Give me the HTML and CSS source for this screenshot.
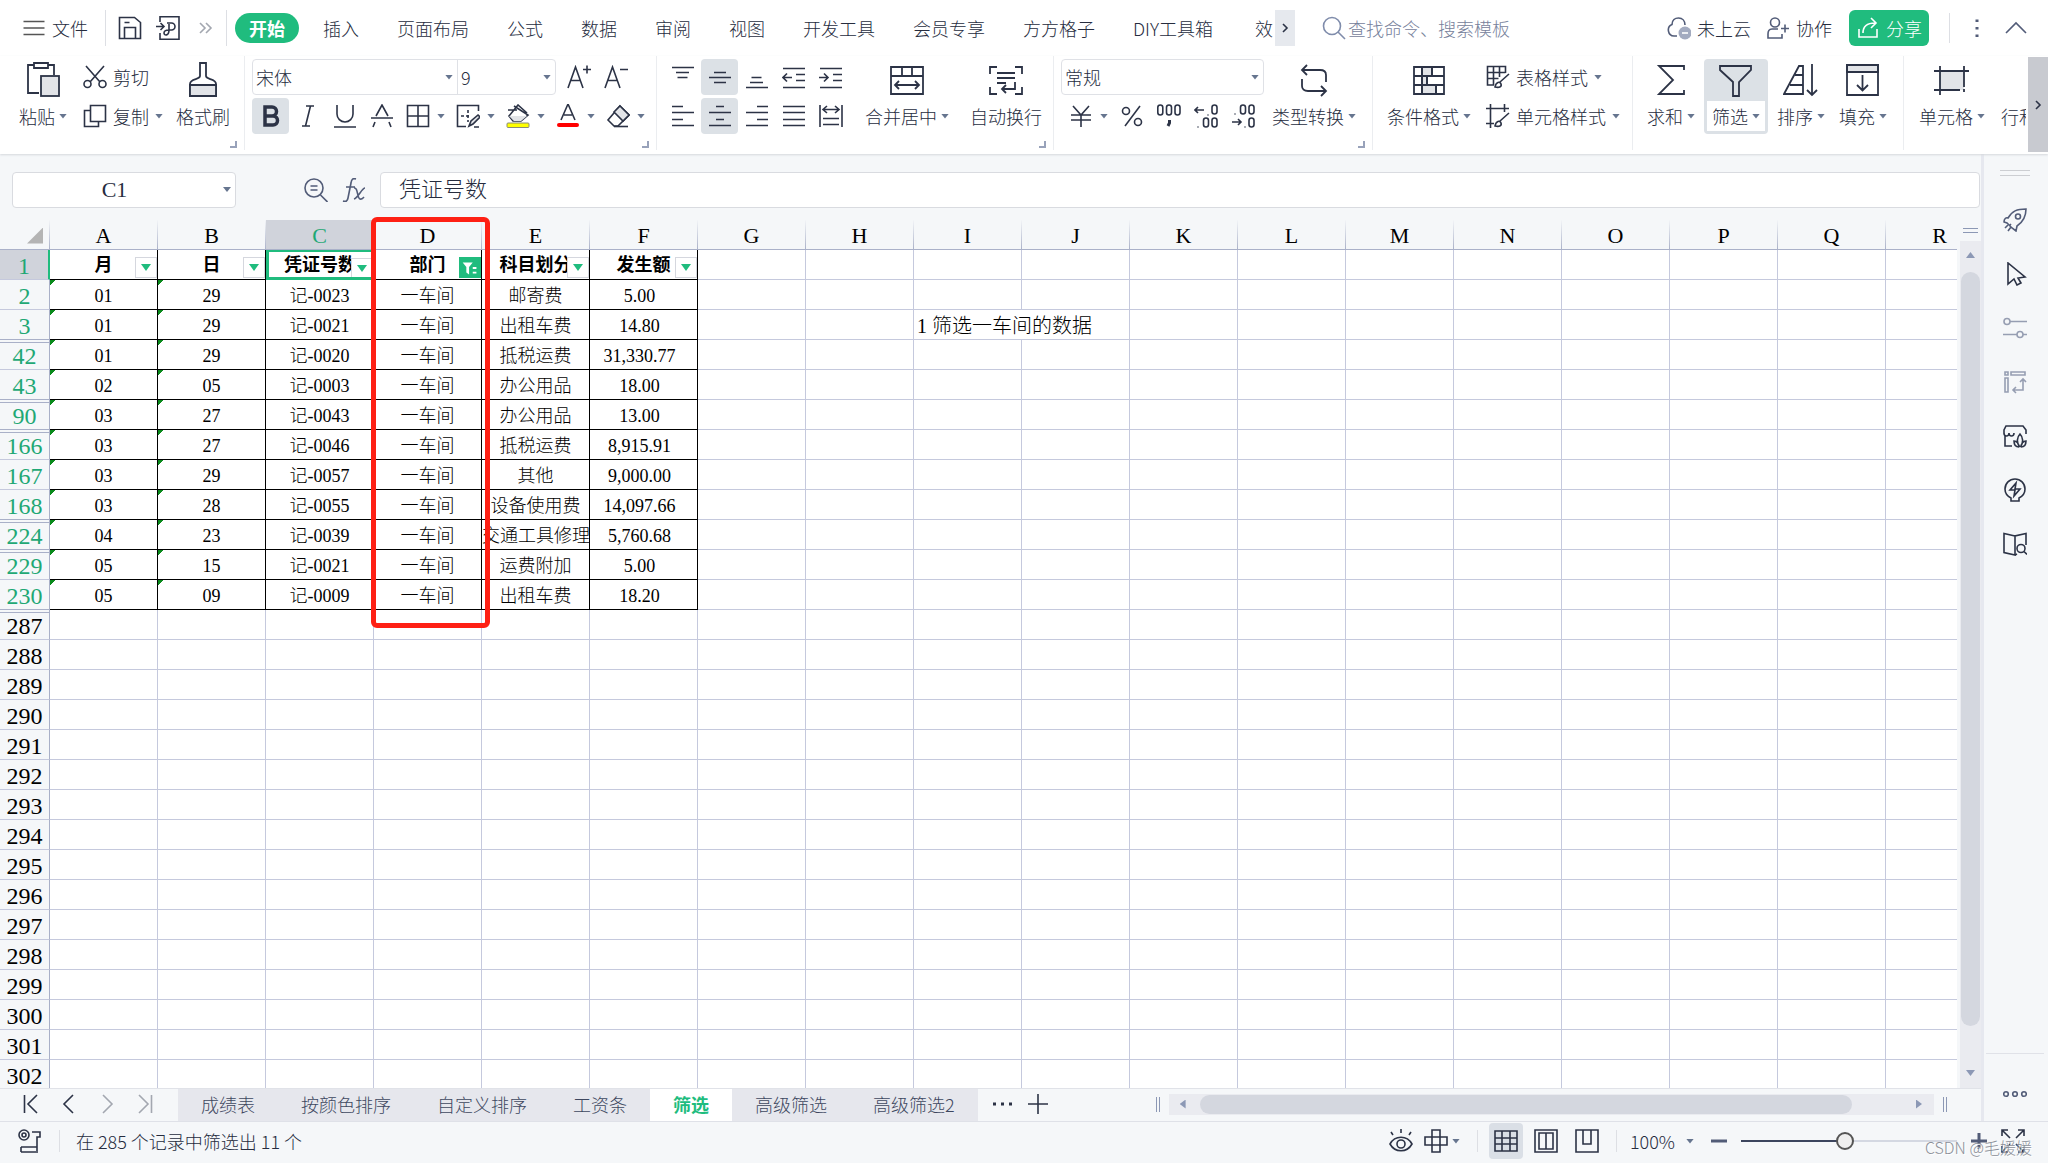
FILE: index.html
```html
<!DOCTYPE html>
<html lang="zh-CN">
<head>
<meta charset="utf-8">
<title>筛选 - 表格</title>
<link rel="stylesheet" href="styles.css">
</head>
<body>
<svg class="defs" aria-hidden="true">
  <symbol id="filter-on" viewBox="0 0 24 20"><path d="M4 4h11l-4 5v8l-3-2V9z" fill="#fff"/><path d="M15 10h4M15 15h4" stroke="#fff" stroke-width="2" fill="none"/></symbol>
</svg>

<header class="menubar">
  <button class="file"><svg class="ic" viewBox="0 0 24 24"><path d="M1.500 5.500h21M1.500 12h21M1.500 18.500h21"/></svg>文件</button>
  <div class="quick">
    <button aria-label="保存"><svg class="ic" viewBox="0 0 24 24"><path d="M1.500 1.500h15l6 5v16h-21zM6.500 22V11.500h11V22M6.500 6.500h5"/></svg></button>
    <button aria-label="输出为PDF"><svg class="ic" viewBox="0 0 24 24"><path d="M4 6V.8h19v22.400H4V17M0 10.500h7M4.500 7l3.500 3.500L4.500 14M11 7h4.500a3.500 3.500 0 0 1 0 7H13V8M13 14c0 6-5 6-5 3s3-3 5-3"/></svg></button>
    <button aria-label="更多"><svg class="ic pale" viewBox="0 0 24 24"><path d="M6 7l5 5-5 5M12 7l5 5-5 5"/></svg></button>
  </div>
  <nav class="tabs">
    <button class="tab current">开始</button><button class="tab">插入</button><button class="tab">页面布局</button><button class="tab">公式</button><button class="tab">数据</button><button class="tab">审阅</button><button class="tab">视图</button><button class="tab">开发工具</button><button class="tab">会员专享</button><button class="tab">方方格子</button><button class="tab">DIY工具箱</button><button class="tab cut">效率</button>
    <button class="more" aria-label="更多选项卡"><svg class="ic" viewBox="0 0 24 24"><path d="M10 8l4 4-4 4"/></svg></button>
  </nav>
  <label class="search"><svg class="ic" viewBox="0 0 24 24"><circle cx="10" cy="10" r="8.500"/><path d="M16 16l7 7"/></svg><input type="text" placeholder="查找命令、搜索模板"></label>
  <div class="account">
    <button><svg class="ic slate" viewBox="0 0 24 24"><path d="M10 20H7a6 6 0 0 1-2-11.500C5 4 8 2 11.500 2c4 0 6.500 3 6.500 7"/><circle cx="18" cy="17" r="6.500" fill="#a3abc0" stroke="none"/><path d="M15 17h6" stroke="#fff"/></svg>未上云</button>
    <button><svg class="ic slate" viewBox="0 0 24 24"><circle cx="9" cy="6.500" r="4.500"/><path d="M12 13H6c-3 0-4 2-4 5v4h14v-4M15 12.500h8M19 8.500v8"/></svg>协作</button>
    <button class="share"><svg class="ic" viewBox="0 0 24 24"><path d="M3 13v8h18v-8M7 17C7 10 11 7 19 7M15 2l5 5-5 5"/></svg>分享</button>
    <i class="rule"></i>
    <button aria-label="菜单"><svg class="ic slate" viewBox="0 0 24 24"><path d="M12 3.500v2.600M12 11v2.600M12 18.500v2.600" stroke-width="3"/></svg></button>
    <button aria-label="折叠功能区"><svg class="ic slate" viewBox="0 0 24 24"><path d="M2 17L12 7l10 10"/></svg></button>
  </div>
</header>

<section class="ribbon">
  <div class="group clip">
    <button class="big"><svg class="ic l" viewBox="0 0 36 36"><path d="M14 31H3V3h6M23 3h6v10M9 1h14v5H9z"/><rect x="16" y="14" width="18" height="20" fill="#e2e4e8"/></svg><span>粘贴<i class="caret"></i></span></button>
    <div class="stack">
      <button class="wide"><svg class="ic" viewBox="0 0 24 24"><circle cx="4.500" cy="19" r="3.500"/><circle cx="19.500" cy="19" r="3.500"/><path d="M3 1l14 16M21 1L7 17"/></svg>剪切</button>
      <button class="wide"><svg class="ic" viewBox="0 0 24 24"><path d="M7.500 1.500h15v16h-15zM7 6.500H1.500v16h14V18"/></svg>复制<i class="caret"></i></button>
    </div>
    <button class="big"><svg class="ic l" viewBox="0 0 36 36"><path d="M15 1h6v13c0 4 10 2 10 8v12H5V22c0-6 10-4 10-8z"/><path d="M5 23h26v11H5z" fill="#e2e4e8"/></svg><span>格式刷</span></button>
    <i class="corner"></i>
  </div>

  <div class="group font">
    <div class="stack">
      <div class="line">
        <div class="combo"><div class="pick family"><select aria-label="字体"><option>宋体</option></select><i class="caret"></i></div><div class="pick size"><select aria-label="字号"><option>9</option></select><i class="caret"></i></div></div>
        <button class="sq" aria-label="增大字号"><svg class="ic" viewBox="0 0 24 24"><path d="M1 23L8.500 2 16 23M4 15.500h9M16 4.500h8M20 .5v8"/></svg></button>
        <button class="sq" aria-label="减小字号"><svg class="ic" viewBox="0 0 24 24"><path d="M1 23L8.500 2 16 23M4 15.500h9M16 4.500h8"/></svg></button>
      </div>
      <div class="line">
        <button class="sq on" aria-label="加粗"><svg class="ic" viewBox="0 0 24 24"><path d="M6 3h7a4.500 4.500 0 0 1 0 9H6zM6 12h8a4.500 4.500 0 0 1 0 9H6z" stroke-width="3.500"/></svg></button>
        <button class="sq" aria-label="倾斜"><svg class="ic" viewBox="0 0 24 24"><path d="M10 2h8M6 22h8M14.500 2l-5 20"/></svg></button>
        <button class="sq" aria-label="下划线"><svg class="ic" viewBox="0 0 24 24"><path d="M4 1v9a8 8 0 0 0 16 0V1M1 23h22"/></svg></button>
        <button class="sq" aria-label="删除线"><svg class="ic" viewBox="0 0 24 24"><path d="M6 12l6-11 6 11M1 14h22M5 18l-2 5M19 18l2 5"/></svg></button>
        <button class="sq drop" aria-label="边框"><svg class="ic" viewBox="0 0 24 24"><path d="M1.500 1.500h21v21h-21zM12 1.500v21M1.500 12h21"/></svg><i class="caret"></i></button>
        <button class="sq drop" aria-label="绘图边框"><svg class="ic" viewBox="0 0 24 24"><path d="M10 22.500H1.500v-21h21V7"/><path d="M12 6v12M5 12h10" stroke-dasharray="3 2"/><path d="M13 22l2-5 7-6 2 2-7 7zM18 23h5" fill="#e2e4e8"/></svg><i class="caret"></i></button>
        <button class="sq drop" aria-label="填充颜色"><svg class="ic" viewBox="0 0 24 24"><path d="M2 6h9M8 2l14 9-7 6H7l-4-5L12 1l9 8"/><path d="M3 12h18l-6 5H8z" fill="#e2e4e8" stroke="none"/><rect x="1" y="19" width="22" height="4.500" rx="1" fill="#ff0" stroke="#8a8c75" stroke-width="1"/></svg><i class="caret"></i></button>
        <button class="sq drop" aria-label="字体颜色"><svg class="ic" viewBox="0 0 24 24"><path d="M5 16l7-16 7 16M8 11h8"/><rect x="1" y="19" width="22" height="4" rx="2" fill="red" stroke="none"/></svg><i class="caret"></i></button>
        <button class="sq drop" aria-label="清除"><svg class="ic" viewBox="0 0 24 24"><path d="M14 2l9 9-11 11H8l-6-6z"/><path d="M14 2l9 9-6 6-9-9z" fill="#e2e4e8"/><path d="M8 22.500h14"/></svg><i class="caret"></i></button>
      </div>
    </div>
    <i class="corner"></i>
  </div>

  <div class="group align">
    <div class="stack">
      <div class="line">
        <button class="sq" aria-label="顶端对齐"><svg class="ic" viewBox="0 0 24 24"><path d="M1 2.500h22M5 7.500h13M6.500 12.500h10"/></svg></button>
        <button class="sq on" aria-label="垂直居中"><svg class="ic" viewBox="0 0 24 24"><path d="M6 7.500h12M1 12.500h22M6 17.500h12"/></svg></button>
        <button class="sq" aria-label="底端对齐"><svg class="ic" viewBox="0 0 24 24"><path d="M6.500 12.500h10M5 17.500h13M1 22.500h22"/></svg></button>
        <button class="sq" aria-label="减少缩进"><svg class="ic" viewBox="0 0 24 24"><path d="M1 3.500h22M14 9.500h9M14 15.500h9M1 22.500h22M10 12.500H1M5 8.500l-4 4 4 4"/></svg></button>
        <button class="sq" aria-label="增加缩进"><svg class="ic" viewBox="0 0 24 24"><path d="M1 3.500h22M14 9.500h9M14 15.500h9M1 22.500h22M0 12.500h9M5 8.500l4 4-4 4"/></svg></button>
      </div>
      <div class="line">
        <button class="sq" aria-label="左对齐"><svg class="ic" viewBox="0 0 24 24"><path d="M1 2.500h11M1 8.500h22M1 15.500h11M1 21.500h22"/></svg></button>
        <button class="sq on" aria-label="水平居中"><svg class="ic" viewBox="0 0 24 24"><path d="M8 2.500h8M1 8.500h22M8 15.500h8M1 21.500h22"/></svg></button>
        <button class="sq" aria-label="右对齐"><svg class="ic" viewBox="0 0 24 24"><path d="M12 2.500h11M1 8.500h22M12 15.500h11M1 21.500h22"/></svg></button>
        <button class="sq" aria-label="两端对齐"><svg class="ic" viewBox="0 0 24 24"><path d="M1 2.500h22M1 8.500h22M1 15.500h22M1 21.500h22"/></svg></button>
        <button class="sq" aria-label="分散对齐"><svg class="ic" viewBox="0 0 24 24"><path d="M1 1v22M23 1v22M4 5.500h16M8 2L4 5.500 8 9M16 2l4 3.500L16 9M4 14.500h16M4 20.500h16"/></svg></button>
      </div>
    </div>
    <button class="big"><svg class="ic l" viewBox="0 0 36 36"><path d="M2 5h32v27H2zM2 14h32M13 5v9M23 5v9M6 23h24M10 19l-4 4 4 4M26 19l4 4-4 4"/></svg><span>合并居中<i class="caret"></i></span></button>
    <button class="big"><svg class="ic l" viewBox="0 0 36 36"><path d="M9 5H2v7M27 5h7v7M9 32H2v-7M27 32h7v-7M9 11h18M9 16h18M9 21h9M27 20v7H14M18 23l-4 4 4 4"/></svg><span>自动换行</span></button>
    <i class="corner"></i>
  </div>

  <div class="group number">
    <div class="stack">
      <div class="line"><div class="combo"><div class="pick format"><select aria-label="数字格式"><option>常规</option></select><i class="caret"></i></div></div></div>
      <div class="line inset">
        <button class="sq drop" aria-label="货币"><svg class="ic" viewBox="0 0 24 24"><path d="M4 2l8 9 8-9M2 11h20M2 16h20M12 11v12"/></svg><i class="caret"></i></button>
        <button class="sq" aria-label="百分比"><svg class="ic" viewBox="0 0 24 24"><circle cx="6" cy="7" r="3.500"/><circle cx="18" cy="18" r="3.500"/><path d="M20 2L5 22"/></svg></button>
        <button class="sq" aria-label="千位分隔"><svg class="ic" viewBox="0 0 24 24"><rect x="0.800" y="1" width="5" height="10" rx="2.500"/><rect x="9.500" y="1" width="5" height="10" rx="2.500"/><rect x="18" y="1" width="5" height="10" rx="2.500"/><path d="M12.500 16v3l-1.500 3" stroke-width="3"/></svg></button>
        <button class="sq" aria-label="增加小数"><svg class="ic" viewBox="0 0 24 24"><path d="M10 6H1M4 3L1 6l3 3M14 10.500v1M4 22.500v1" /><rect x="18" y="1" width="5" height="9" rx="2.500"/><rect x="9.500" y="14" width="5" height="9" rx="2.500"/><rect x="18" y="14" width="5" height="9" rx="2.500"/></svg></button>
        <button class="sq" aria-label="减少小数"><svg class="ic" viewBox="0 0 24 24"><path d="M1 18h9M7 15l3 3-3 3M14 22.500v1M4 9.500v1"/><rect x="18" y="1" width="5" height="9" rx="2.500"/><rect x="9.500" y="1" width="5" height="9" rx="2.500"/><rect x="18" y="14" width="5" height="9" rx="2.500"/></svg></button>
      </div>
    </div>
    <button class="big"><svg class="ic l" viewBox="0 0 36 36"><path d="M6 8h18c4 0 6 2 6 5v7M11 3L6 8l5 5M30 29H12c-4 0-6-2-6-5v-7M25 24l5 5-5 5"/></svg><span>类型转换<i class="caret"></i></span></button>
    <i class="corner"></i>
  </div>

  <div class="group style">
    <button class="big"><svg class="ic l" viewBox="0 0 36 36"><path d="M11 5h10v9H11zM11 14h5v9h-5zM11 23h14v9H11z" fill="#e2e4e8"/><path d="M3 5h30v27H3zM3 14h30M3 23h30M11 5v27M21 5v9M16 14v9M25 23v9"/></svg><span>条件格式<i class="caret"></i></span></button>
    <div class="stack">
      <button class="wide"><svg class="ic" viewBox="0 0 24 24"><path d="M8 20H1.500V1.500h18V8M1.500 7.500h18M1.500 13.500h11M7.500 1.500V20M13.500 1.500V12M23 9l-9 8M9 22c1-5 5-6 6-3s-2 4-6 3z"/></svg>表格样式<i class="caret"></i></button>
      <button class="wide"><svg class="ic" viewBox="0 0 24 24"><path d="M0 4.500h23M4.500 0v24M18.500 0v8M0 19.500h8M23 9l-9 8M9 22c1-5 5-6 6-3s-2 4-6 3z"/></svg>单元格样式<i class="caret"></i></button>
    </div>
  </div>

  <div class="group edit">
    <button class="big"><svg class="ic l" viewBox="0 0 36 36"><path d="M31 8V4H6l14 14L6 32h25v-4"/></svg><span>求和<i class="caret"></i></span></button>
    <button class="big active"><svg class="ic l" viewBox="0 0 36 36"><path d="M2 4h31v4L21 20v14h-6V20L2 8z"/></svg><span>筛选<i class="caret"></i></span></button>
    <button class="big"><svg class="ic l" viewBox="0 0 36 36"><path d="M1 32L16 4h4v28zM12 13h8M7 23h13M29 2v31M24 28l5 5 5-5"/></svg><span>排序<i class="caret"></i></span></button>
    <button class="big"><svg class="ic l" viewBox="0 0 36 36"><path d="M2 3h31v7H2z" fill="#e2e4e8"/><path d="M2 3h31v30H2zM17.500 13v15M12 23l5.500 5.500L23 23"/></svg><span>填充<i class="caret"></i></span></button>
  </div>

  <div class="group cells">
    <button class="big"><svg class="ic l" viewBox="0 0 36 36"><path d="M6 9h24v19H6z" fill="#e2e4e8" stroke="none"/><path d="M0 9h35M0 28h26M6 4v29M30 4v21M30 27v3"/></svg><span>单元格<i class="caret"></i></span></button>
    <button class="big"><svg class="ic l" viewBox="0 0 36 36"><path d="M17 5h17v27H17zM17 14h17M17 23h17"/></svg><span>行和列<i class="caret"></i></span></button>
  </div>
  <button class="scroll" aria-label="向右滚动"><svg class="ic" viewBox="0 0 24 24"><path d="M10 8l4 4-4 4"/></svg></button>
</section>

<main class="work">
  <div class="book">
    <div class="formula">
      <div class="namebox"><input type="text" value="C1" aria-label="名称框"><i class="caret"></i></div>
      <div class="tools">
        <button aria-label="查找"><svg class="ic slate" viewBox="0 0 24 24"><circle cx="10" cy="10" r="9"/><path d="M6.500 8h7M6.500 12h7M16.500 17l7 7"/></svg></button>
        <button aria-label="插入函数"><svg class="ic slate" viewBox="0 0 24 24"><path d="M14 1c-3-1-4.500 0-5 4L6 20c-.5 3-2 4-5 3M4 9h9M12 10c4-1 3 10 6 11 2 .5 3-1 4-2M23 10c-3 0-7 10-11 11"/></svg></button>
      </div>
      <input class="entry" type="text" value="凭证号数" aria-label="编辑栏">
    </div>
    <div class="canvas">
      <div class="sheet">
        <table>
          <colgroup><col class="no"><col span="18"></colgroup>
          <thead><tr><th class="all"><i></i></th><th>A</th><th>B</th><th class="sel">C</th><th>D</th><th>E</th><th>F</th><th>G</th><th>H</th><th>I</th><th>J</th><th>K</th><th>L</th><th>M</th><th>N</th><th>O</th><th>P</th><th>Q</th><th>R</th></tr></thead>
          <tbody>
            <tr class="heads"><th class="sel">1</th><td>月<button class="flt" aria-label="筛选月"></button></td><td>日<button class="flt" aria-label="筛选日"></button></td><td class="cell-on">凭证号数<button class="flt" aria-label="筛选凭证号数"></button></td><td>部门<button class="flt set" aria-label="筛选部门"><svg><use href="#filter-on"/></svg></button></td><td>科目划分<button class="flt" aria-label="筛选科目划分"></button></td><td>发生额<button class="flt" aria-label="筛选发生额"></button></td></tr>
            <tr class="rec"><th>2</th><td>01</td><td>29</td><td>记-0023</td><td>一车间</td><td>邮寄费</td><td>5.00</td></tr>
            <tr class="rec gap"><th>3</th><td>01</td><td>29</td><td>记-0021</td><td>一车间</td><td>出租车费</td><td>14.80</td><td class="free" colspan="2"></td><td class="note" colspan="2">1 筛选一车间的数据</td></tr>
            <tr class="rec"><th>42</th><td>01</td><td>29</td><td>记-0020</td><td>一车间</td><td>抵税运费</td><td>31,330.77</td></tr>
            <tr class="rec gap"><th>43</th><td>02</td><td>05</td><td>记-0003</td><td>一车间</td><td>办公用品</td><td>18.00</td></tr>
            <tr class="rec gap"><th>90</th><td>03</td><td>27</td><td>记-0043</td><td>一车间</td><td>办公用品</td><td>13.00</td></tr>
            <tr class="rec"><th>166</th><td>03</td><td>27</td><td>记-0046</td><td>一车间</td><td>抵税运费</td><td>8,915.91</td></tr>
            <tr class="rec"><th>167</th><td>03</td><td>29</td><td>记-0057</td><td>一车间</td><td>其他</td><td>9,000.00</td></tr>
            <tr class="rec gap"><th>168</th><td>03</td><td>28</td><td>记-0055</td><td>一车间</td><td>设备使用费</td><td>14,097.66</td></tr>
            <tr class="rec gap"><th>224</th><td>04</td><td>23</td><td>记-0039</td><td>一车间</td><td>交通工具修理</td><td>5,760.68</td></tr>
            <tr class="rec"><th>229</th><td>05</td><td>15</td><td>记-0021</td><td>一车间</td><td>运费附加</td><td>5.00</td></tr>
            <tr class="rec gap"><th>230</th><td>05</td><td>09</td><td>记-0009</td><td>一车间</td><td>出租车费</td><td>18.20</td></tr>
            <tr><th>287</th></tr><tr><th>288</th></tr><tr><th>289</th></tr><tr><th>290</th></tr>
            <tr><th>291</th></tr><tr><th>292</th></tr><tr><th>293</th></tr><tr><th>294</th></tr>
            <tr><th>295</th></tr><tr><th>296</th></tr><tr><th>297</th></tr><tr><th>298</th></tr>
            <tr><th>299</th></tr><tr><th>300</th></tr><tr><th>301</th></tr><tr><th>302</th></tr>
          </tbody>
        </table>
        <div class="marker"></div>
      </div>
      <div class="vbar">
        <i class="split"></i>
        <div class="track"><i class="up"></i><i class="thumb"></i><i class="down"></i></div>
      </div>
    </div>
    <div class="sheets">
      <div class="steps">
        <button aria-label="第一张"><svg class="ic" viewBox="0 0 24 24"><path d="M5.500 3v18M18 3l-9 9 9 9"/></svg></button>
        <button aria-label="上一张"><svg class="ic" viewBox="0 0 24 24"><path d="M16 3l-9 9 9 9"/></svg></button>
        <button aria-label="下一张"><svg class="ic pale" viewBox="0 0 24 24"><path d="M8 3l9 9-9 9"/></svg></button>
        <button aria-label="最后一张"><svg class="ic pale" viewBox="0 0 24 24"><path d="M18.500 3v18M6 3l9 9-9 9"/></svg></button>
      </div>
      <button class="leaf">成绩表</button><button class="leaf">按颜色排序</button><button class="leaf">自定义排序</button><button class="leaf">工资条</button><button class="leaf current">筛选</button><button class="leaf">高级筛选</button><button class="leaf">高级筛选2</button>
      <div class="add">
        <button aria-label="更多工作表"><svg class="ic" viewBox="0 0 24 24"><path d="M3 12h3M11 12h3M19 12h3" stroke-width="3"/></svg></button>
        <button aria-label="新建工作表"><svg class="ic" viewBox="0 0 24 24"><path d="M2 12h20M12 2v20"/></svg></button>
      </div>
      <div class="hbar"><i class="grip"></i><div class="track"><i class="left"></i><i class="thumb"></i><i class="right"></i></div><i class="grip"></i></div>
    </div>
  </div>
  <aside class="side">
    <i class="handle"></i>
    <button aria-label="快捷"><svg class="ic slate" viewBox="0 0 24 24"><path d="M5 10c4-7 9-9 18-9 0 8-3 13-9 17l-1 5-4-3-5-5-3-1c0-3 2-5 4-4zM8 16l-2 2"/><circle cx="15" cy="8.500" r="2.500"/><path d="M5 17l-3 3M8 19l-3 4"/></svg></button>
    <button aria-label="选择"><svg class="ic" viewBox="0 0 24 24"><path d="M5 1v21l6-5 3 6 4-2-3-5 7-1z"/></svg></button>
    <button aria-label="设置"><svg class="ic faint" viewBox="0 0 24 24"><circle cx="4" cy="5.500" r="3"/><path d="M7 5.500h17M0 18.500h14M20 18.500h4"/><circle cx="17" cy="18.500" r="3"/></svg></button>
    <button aria-label="透视"><svg class="ic faint" viewBox="0 0 24 24"><path d="M2 2h3v3H2zM8 2h14v3H8zM2 8h3v14H2zM20 9v11H10M17 12l3-3 3 3M13 17l-3 3 3 3"/></svg></button>
    <button aria-label="稻壳"><svg class="ic" viewBox="0 0 24 24"><path d="M2 12v10h7M1 10V6l2-4h17l3 4v4M1 9c0 4 5 4 5 0 0 4 5 4 5 0M17 23c-4-4-3-10 0-13 3 3 4 9 0 13M16 23c-4 0-5-3-5-6 3 0 5 3 5 6M18 23c4 0 5-3 5-6-3 0-5 3-5 6"/></svg></button>
    <button aria-label="灵感"><svg class="ic" viewBox="0 0 24 24"><path d="M8 23v-3C4 18 2 15 2 11a10 10 0 0 1 20 0c0 4-2 7-6 9v3zM13 5l-6 7h5l-1 6 6-7h-5z"/></svg></button>
    <button aria-label="帮助"><svg class="ic" viewBox="0 0 24 24"><path d="M12 4L1 1.500v19L12 23V4l11-2.500V13"/><circle cx="18" cy="16.500" r="4"/><path d="M21 19.500l3 3M14 22l-2 1"/></svg></button>
    <button class="last" aria-label="更多工具"><svg class="ic slate" viewBox="0 0 24 24"><circle cx="3" cy="12" r="2.300"/><circle cx="12" cy="12" r="2.300"/><circle cx="21" cy="12" r="2.300"/></svg></button>
  </aside>
</main>

<footer class="status">
  <button class="rec-ic" aria-label="录制"><svg class="ic" viewBox="0 0 24 24"><circle cx="6" cy="6" r="5"/><circle cx="6" cy="6" r="2"/><path d="M14 3h8v5h-3v14M3 18h16M3 23h17M3 18v5"/></svg></button>
  <p>在 285 个记录中筛选出 11 个</p>
  <div class="views">
    <button aria-label="护眼"><svg class="ic" viewBox="0 0 24 24"><path d="M12 0v4M2 3l2 3M22 3l-2 3M1 15c5-9 17-9 22 0-5 9-17 9-22 0z"/><circle cx="12" cy="15" r="4"/></svg></button>
    <button class="read" aria-label="阅读"><svg class="ic" viewBox="0 0 24 24"><path d="M8 1h8v22H8zM1 8h22v8H1z"/></svg><i class="caret"></i></button>
    <i class="rule"></i>
    <button class="on" aria-label="普通视图"><svg class="ic" viewBox="0 0 24 24"><path d="M1 2h22v20H1zM1 9h22M1 15h22M8 2v20M16 2v20"/></svg></button>
    <button aria-label="页面布局"><svg class="ic" viewBox="0 0 24 24"><path d="M1 1h22v22H1zM5 4h14v16H5zM12 4v16"/></svg></button>
    <button class="paged" aria-label="分页预览"><svg class="ic" viewBox="0 0 24 24"><path d="M1 1h22v22H1zM8 1v14h8V1"/></svg></button>
    <i class="rule"></i>
  </div>
  <div class="zoom">
    <button class="pct">100%<i class="caret"></i></button>
    <button aria-label="缩小"><svg class="ic slate" viewBox="0 0 24 24"><path d="M4 12h16" stroke-width="3"/></svg></button>
    <input type="range" min="0" max="100" value="48" aria-label="缩放">
    <button aria-label="放大"><svg class="ic slate" viewBox="0 0 24 24"><path d="M4 12h16M12 4v16" stroke-width="3"/></svg></button>
    <button aria-label="全屏"><svg class="ic" viewBox="0 0 24 24"><path d="M1 7V1h6M17 1h6v6M23 17v6h-6M7 23H1v-6M1 1l8 8M23 1l-8 8M23 23l-8-8M1 23l8-8"/></svg></button>
    <span class="credit">CSDN @毛媛媛</span>
  </div>
</footer>
</body>
</html>
```
FILE: styles.css
```css
* { box-sizing: border-box; }

body {
  margin: 0;
  height: 100vh;
  display: flex;
  flex-direction: column;
  overflow: hidden;
  background: #f5f7f9;
  color: #262c3e;
  font: 300 18px/24px "Noto Sans CJK SC", sans-serif;
}

button, input, select { font: inherit; color: inherit; border: 0; background: none; padding: 0; margin: 0; }
button { display: flex; align-items: center; white-space: nowrap; flex: none; }
input, select { outline: 0; min-width: 0; }
.defs { display: none; }

.ic { width: 24px; height: 24px; flex: none; fill: none; stroke: #2c3346; stroke-width: 1.6; }
.ic.l { width: 36px; height: 36px; stroke-width: 1.8; }
.ic.slate { stroke: #525c78; }
.ic.faint { stroke: #969eb2; }
.ic.pale { stroke: #a3a7b0; }

.caret { flex: none; width: 8px; height: 5px; background: #66758f; clip-path: polygon(0 0, 100% 0, 50% 100%); }
.rule { width: 1px; height: 30px; background: #dddfe4; flex: none; }

/* Menu bar */
.menubar { display: flex; align-items: center; height: 56px; flex: none; background: #fff; }
.file { gap: 6px; padding-left: 22px; width: 105px; }
.file .ic { stroke: #555; }
.quick { display: flex; gap: 14px; align-items: center; height: 36px; padding: 0 12px; width: 122px; border: solid #dddfe4; border-width: 0 1px; }
.tabs { display: flex; align-items: center; gap: 10px; margin-left: 8px; }
.tab { height: 30px; padding: 0 14px; }
.tab.current { border-radius: 15px; background: #20bc7e; color: #fff; font-weight: 700; }
.tab.cut { width: 36px; padding: 0 0 0 18px; overflow: hidden; }
.more { width: 20px; height: 36px; margin-left: -8px; background: #e6e9ee; justify-content: center; }
.search { display: flex; align-items: center; gap: 2px; margin-left: 27px; flex: 1; }
.search .ic { stroke: #7f8cab; }
.search input { flex: 1; }
.search input::placeholder { color: #76819b; opacity: 1; }
.account { display: flex; align-items: center; gap: 15px; padding-right: 20px; }
.account button { gap: 6px; }
.account .share { height: 36px; padding: 0 7px; margin-left: 2px; border-radius: 6px; background: #20bc7e; color: #fff; }
.share .ic { stroke: #fff; }
.account .rule { margin-left: 5px; }

/* Ribbon */
.ribbon { display: flex; height: 98px; flex: none; background: #fff; box-shadow: 0 1px 2px #d5d8dc; position: relative; }
.group { position: relative; display: flex; flex: none; align-items: flex-start; height: 94px; padding-top: 3px; border-right: 1px solid #ebedf0; }
.clip { width: 245px; padding-left: 14px; gap: 6px; }
.clip .wide { padding-right: 2px; }
.font { width: 412px; padding-left: 7px; }
.align { width: 397px; padding-left: 7px; gap: 11px; }
.number { width: 319px; padding-left: 7px; gap: 3px; }
.number .combo { margin: 0; }
.style { width: 260px; padding-left: 9px; gap: 5px; }
.edit { width: 271px; padding-left: 9px; gap: 4px; }
.cells { flex: 1; min-width: 0; padding-left: 10px; gap: 6px; overflow: hidden; border: 0; }
.stack { display: grid; gap: 3px; }
.line { display: flex; height: 36px; }
.line.inset { padding-left: 2px; }
.big { flex-direction: column; padding: 0 5px; height: 75px; }
.big .ic { margin: 3px 0; }
.big span { display: flex; align-items: center; gap: 4px; height: 30px; }
.big.active { background: #dce1e6; border-radius: 4px; padding: 0 3px; }
.big.active span { background: #fff; padding: 0 5px; }
.wide { height: 36px; padding: 0 5px; gap: 6px; }
.sq { width: 37px; height: 36px; justify-content: center; border-radius: 4px; }
.sq.on { background: #dce1e6; }
.sq.drop { width: 50px; padding-left: 6px; justify-content: flex-start; gap: 7px; }
.corner { position: absolute; right: 7px; bottom: 2px; width: 7px; height: 7px; border: solid #98a2ba; border-width: 0 2px 2px 0; }
.combo { display: flex; border: 1px solid #dfe1e6; border-radius: 4px; margin-right: 4px; }
.pick { display: flex; align-items: center; padding-right: 4px; }
.pick select { flex: 1; appearance: none; padding-left: 3px; }
.family { width: 205px; border-right: 1px solid #dfe1e6; }
.size { width: 97px; }
.format { width: 201px; }
.scroll { width: 20px; height: 95px; margin: 1px 0 0 2px; background: #c8cad0; justify-content: center; }

/* Work area */
.work { flex: 1; min-height: 0; display: flex; }
.book { flex: 1; min-width: 0; display: flex; flex-direction: column; }
.formula { display: flex; align-items: center; height: 66px; padding: 5px 1px 0 12px; flex: none; }
.namebox, .entry { height: 36px; background: #fff; border: 1px solid #d9dbe0; border-radius: 4px; }
.namebox { width: 224px; display: flex; align-items: center; padding-right: 4px; }
.namebox input { flex: 1; text-align: center; padding-right: 7px; font: 22px "Liberation Serif", serif; }
.tools { display: flex; gap: 14px; padding: 0 14px 0 68px; }
.entry { flex: 1; padding: 0 18px 6px; font-size: 22px; }

.canvas { flex: 1; min-height: 0; display: flex; overflow: clip; overflow-clip-margin: 4px; }
.sheet { position: relative; flex: 1; min-width: 0; overflow: clip; overflow-clip-margin: 4px; border-right: 1px solid #d9dbe3; }
table {
  table-layout: fixed;
  width: 1994px;
  border-spacing: 0;
  font: 300 18px/26px "Liberation Serif", "Noto Sans CJK SC", serif;
  color: #000;
  background: linear-gradient(90deg, #0000 107px, #c5c9dd 107px) 50px 0 / 108px 30px, linear-gradient(#0000 29px, #c5c9dd 29px) 0 0 / 108px 30px, #fff;
}
col { width: 108px; }
col.no { width: 50px; }
tr { height: 30px; }
th, td { height: 30px; padding: 0; white-space: nowrap; overflow: hidden; }
th { font-size: 24px; font-weight: 400; background: #f5f7f9; }
thead th { padding-top: 2px; font-size: 22px; border: solid; border-width: 0 1px 1px 0; border-image: linear-gradient(#f5f7f9, #a9b0c8) 1; }
thead th.sel { background: #d0d3db; color: #1fa875; }
.all i { display: block; width: 16px; height: 16px; margin-left: 27px; background: #b4b4b4; clip-path: polygon(100% 0, 100% 100%, 0 100%); }
tbody th { padding-top: 3px; border-right: 1px solid #a9b0c8; border-bottom: 1px solid #c5c9dd; }
.rec th { color: #1fa875; }
.gap + tr th { background: linear-gradient(#f5f7f9 2px, #a9b0c8 2px 3px, #f5f7f9 3px); }
.gap th { border-bottom-color: #a9b0c8; }
.heads th.sel { background: #d0d3db; color: #1fa875; border-right: 2px solid #20bc7e; }
td { padding-top: 3px; text-align: center; }
.heads td, .rec td { border: solid #000; border-width: 0 1px 1px 0; }
.heads td { position: relative; font-weight: 700; padding-top: 0; line-height: 24px; }
.rec td:nth-child(7) { padding-right: 8px; }
.rec td:nth-child(2), .rec td:nth-child(3) { background: linear-gradient(135deg, #0a8a1c 4px, #0000 4px); }
.rec td.free { border: 0; }
.rec td.note { border: solid #c5c9dd; border-width: 0 1px 1px 0; background: #fff; text-align: left; padding-left: 3px; font-size: 20px; }
.heads .cell-on { border: 3px solid #20bc7e; border-top-width: 2px; }
.flt { position: absolute; right: 0; bottom: 1px; width: 22px; height: 21px; background: #fff; border: 1px solid #d5d7de; justify-content: center; }
.cell-on .flt { right: -2px; bottom: -2px; }
.flt::after { content: ""; width: 10px; height: 7px; background: #20bc7e; clip-path: polygon(0 0, 100% 0, 50% 100%); }
.flt.set { background: #20bc7e; border: 0; }
.flt.set::after { display: none; }
.flt svg { width: 22px; height: 20px; }
.marker { position: absolute; left: 371px; top: -3px; width: 119px; height: 411px; border: 5px solid #fe2014; border-radius: 6px; }

.vbar { width: 24px; padding-left: 3px; display: flex; flex-direction: column; background: #f5f7f9; z-index: 1; }
.split { width: 15px; height: 5px; margin: 8px 3px; border: solid #8c98b5; border-width: 1px 0; }
.vbar .track { flex: 1; display: flex; flex-direction: column; align-items: center; background: #eaebf0; }
.vbar .thumb { flex: 1; width: 19px; border-radius: 10px; background: #d4d7df; }
.up, .down { width: 9px; height: 6px; background: #8c98b5; }
.up { margin: 11px 0 14px; clip-path: polygon(50% 0, 100% 100%, 0 100%); }
.down { margin: 44px 0 12px; clip-path: polygon(0 0, 100% 0, 50% 100%); }

/* Sheet tabs */
.sheets { position: relative; z-index: 2; display: flex; align-items: center; height: 33px; flex: none; background: #f5f7f9; border-top: 1px solid #e0e2e8; }
.steps { display: flex; gap: 14px; width: 178px; padding: 0 0 2px 19px; }
.leaf { height: 32px; padding: 0 23px 3px; background: #e6e7ed; color: #3e475f; }
.leaf.current { background: #fff; color: #20bc7e; font-weight: 700; }
.add { display: flex; gap: 12px; padding: 0 0 2px 12px; }
.hbar { flex: 1; margin-left: 106px; padding: 0 34px 2px 0; display: flex; align-items: center; gap: 9px; }
.hbar .track { flex: 1; height: 21px; display: flex; align-items: center; background: #eaebf0; }
.hbar .thumb { flex: 1; height: 19px; border-radius: 10px; background: #d4d7df; }
.left, .right { width: 6px; height: 9px; background: #8c98b5; }
.left { margin: 0 14px 0 11px; clip-path: polygon(100% 0, 100% 100%, 0 50%); }
.right { margin: 0 12px 0 64px; clip-path: polygon(0 0, 100% 50%, 0 100%); }
.grip { width: 4px; height: 15px; border: solid #8c98b5; border-width: 0 1px; }

/* Side panel */
.side { width: 67px; flex: none; display: flex; flex-direction: column; align-items: center; gap: 30px; padding: 16px 2px 0 0; border-left: 3px solid #e6e8ef; background: #f5f7f9; }
.handle { width: 30px; height: 6px; margin-bottom: 2px; border: solid #ccced2; border-width: 1px 0; }
.side .last { margin-top: auto; width: 58px; height: 68px; padding-top: 12px; justify-content: center; border-top: 1px solid #e0e2e8; }

/* Status bar */
.status { display: flex; align-items: center; height: 42px; padding-bottom: 3px; flex: none; background: #f5f7f9; border-top: 1px solid #dfe1e8; }
.rec-ic { padding: 0 17px 0 18px; border-right: 1px solid #dddfe4; }
.status p { margin: 0; padding-left: 16px; flex: 1; }
.views, .zoom { display: flex; align-items: center; }
.views { gap: 11px; margin-right: 13px; }
.views button { gap: 4px; }
.views .read { margin-right: 6px; }
.views .paged { margin: 0 6px; }
.views .rule, .rec-ic { height: 22px; }
.views .on { height: 36px; padding: 0 5px; background: #dadfe6; border-radius: 4px; }
.zoom { position: relative; gap: 10px; padding-right: 23px; }
.pct { gap: 11px; margin-right: 3px; }
.zoom input { width: 216px; height: 20px; appearance: none; }
.zoom input::-webkit-slider-runnable-track { height: 2px; background: linear-gradient(90deg, #3c455e 46%, #d4d8e2 46%); }
.zoom input::-webkit-slider-thumb { appearance: none; width: 18px; height: 18px; margin-top: -8px; border: 2px solid #555; border-radius: 50%; background: #efefef; }
.credit { position: absolute; right: 16px; bottom: -4px; font-size: 16px; line-height: 20px; color: #8b8f98; text-shadow: 1px 1px #fff; }
```
